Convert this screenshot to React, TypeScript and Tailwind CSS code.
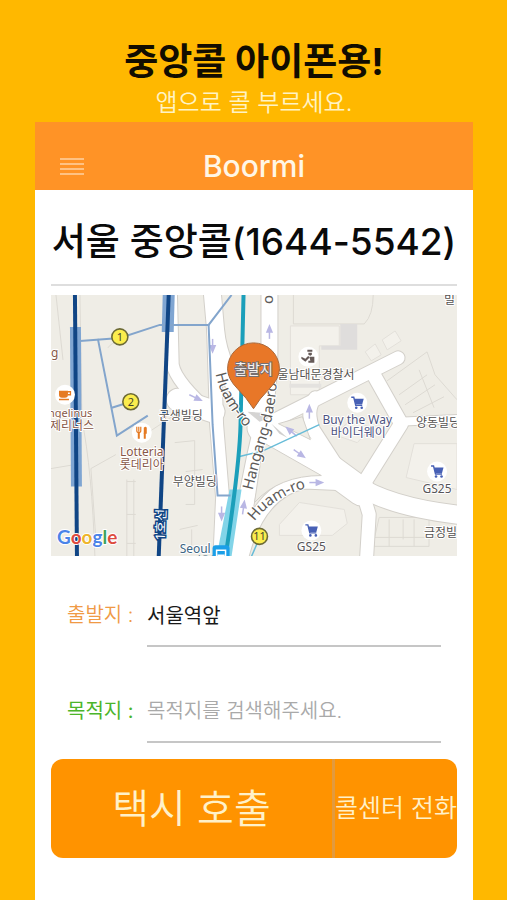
import React from "react";

const roads: { d: string; w: number }[] = [
  { d: "M212 285 L216 330 Q220 375 262 422 L300 450 L360 488", w: 17 },
  { d: "M171 285 L173 365 Q176 382 212 414", w: 12 },
  { d: "M178 400 L214 412", w: 22 },
  { d: "M214 330 L217 425 L223 498 L220 565", w: 13 },
  { d: "M270 285 L270 350 Q270 400 256 455 L234 565", w: 16 },
  { d: "M262 428 L310 454 L362 492", w: 28 },
  { d: "M268 424 L399 358", w: 13 },
  { d: "M374 374 L402 424 L362 488", w: 14 },
  { d: "M400 422 L465 419", w: 8 },
  { d: "M316 398 Q306 410 314 430 L345 478", w: 13 },
  { d: "M240 565 Q256 492 305 482 L350 484", w: 14 },
  { d: "M362 488 L370 515 L367 565", w: 13 },
  { d: "M355 484 Q390 508 465 516", w: 18 },
];

const arrows = [
  { x: 213, y: 346, r: 180 },
  { x: 270, y: 332, r: 0 },
  { x: 196, y: 398, r: 115 },
  { x: 222, y: 514, r: 180 },
  { x: 244, y: 508, r: 8 },
  { x: 310, y: 412, r: 0 },
  { x: 300, y: 454, r: 125 },
  { x: 317, y: 483, r: 90 },
  { x: 292, y: 432, r: -50 },
];

const halo = {
  stroke: "#ffffff",
  strokeWidth: 2,
  strokeLinejoin: "round" as const,
  paintOrder: "stroke" as const,
};

function Cart({ x, y }: { x: number; y: number }) {
  return (
    <g transform={`translate(${x} ${y})`}>
      <circle r="10" fill="#fff" />
      <path d="M-6 -5.500 H-3.500 L-1.500 2.500 H5" fill="none" stroke="#4760b5" strokeWidth="1.400" />
      <path d="M-3 -4 H6.500 L5 1.500 H-1.800 Z" fill="#4760b5" />
      <circle cx="-1" cy="5" r="1.300" fill="#4760b5" />
      <circle cx="4.500" cy="5" r="1.300" fill="#4760b5" />
    </g>
  );
}

function Exit({ x, y, n }: { x: number; y: number; n: string }) {
  return (
    <g>
      <circle cx={x} cy={y} r="8" fill="#fbed4d" stroke="#6c6a35" strokeWidth="1.600" />
      <text x={x} y={y + 4} fontSize="11" textAnchor="middle" fill="#44442c">
        {n}
      </text>
    </g>
  );
}

function StreetMap() {
  return (
    <svg
      viewBox="51 295 407 262"
      role="img"
      aria-label="지도"
      className="block w-full font-['Noto_Sans','Noto_Sans_CJK_KR',sans-serif]"
    >
      <defs>
        <path id="huam-west" d="M216 374 Q221 402 250 432" />
        <path id="hangang" d="M253 491 L264 448 Q277 415 278 365" />
        <path id="huam-south" d="M255 522 Q275 496 312 487" />
      </defs>

      <rect x="51" y="295" width="407" height="262" fill="#efede6" />
      <g fill="none" stroke="#dddad3">
        <path d="M56 295 L63 360 M80 295 L82 420 Q92 470 95 557 M51 469 L75 465 M91 469 L116 455 M91 469 L96 540 M127 480 V557 M134 480 V557 M127 482 H136 M127 515 H136 M127 544 H136" />
        <path d="M294 295 V324 H365 Q374 315 374 295 M108 348 Q112 342 120 342 M145 435 L180 412" />
        <path d="M175 443 L195 441 V505 H186 M192 530 V555 M186 472 L203 470 M180 530 L198 526" />
        <path d="M375 540 L380 518 H430 V547 H375 Z M390 520 V547 M404 520 V540 M415 520 V547 M375 538 H440" />
        <path d="M388 381 L428 352 L436 375 L458 400 M400 395 L428 375 M406 405 L436 385 M414 413 L445 397 M420 370 L435 408" />
      </g>
      <g fill="#f3f1eb" stroke="#e3e0da">
        <path d="M291 326 H340 V346 H320 V395 H291 Z" />
        <path d="M280 525 L300 503 L345 510 L348 524 L333 536 H280 Z" />
        <path d="M407 478 L415 444 H458 V490 Z" />
        <path d="M383 340 L396 331 L402 341 L388 350 Z M366 352 L376 344 L382 355 L372 361 Z" />
        <path d="M335 435 L358 443 L372 428 L352 420 Z" />
      </g>
      <path d="M341 324 H358 V350 H322 V346 H341 Z" fill="#dfdddc" />
      <path d="M290 388 H322 V384 H290 Z" fill="#e4e2df" />

      <g fill="none" strokeLinecap="round" strokeLinejoin="round">
        {roads.map((r) => (
          <path key={r.d} d={r.d} stroke="#d3d0ca" strokeWidth={r.w + 2} />
        ))}
        {roads.map((r) => (
          <path key={r.d} d={r.d} stroke="#ffffff" strokeWidth={r.w} />
        ))}
      </g>
      <path d="M264 443 L322 476 Q280 476 255 503 Z" fill="#efede6" stroke="#d3d0ca" />
      <path d="M279 424 L303 417 L311 440 Z" fill="#efede6" stroke="#d3d0ca" />
      <path d="M248 412 L262 413 L270 418 L260 422 Z" fill="#d5d4d3" />
      <path d="M272 424 L288 438 L280 434 Z" fill="#d0cfce" />

      <g stroke="#b9b7e4" strokeWidth="1.500" fill="#b9b7e4">
        {arrows.map((a) => (
          <g key={`${a.x}-${a.y}`} transform={`translate(${a.x} ${a.y}) rotate(${a.r})`}>
            <path d="M0 7 V-2" />
            <path d="M0 -6 L2.500 0 H-2.500 Z" />
          </g>
        ))}
      </g>

      <path d="M70 327 H81 L82 487 H71 Z" fill="#7fa5d2" />
      <path d="M163 295 H175 L174 332 H162 Z" fill="#7fa5d2" />
      <path d="M230 490 H242 L232 557 H217 Z" fill="#82d4e8" />
      <g fill="none" stroke="#83a5cc" strokeWidth="2">
        <path d="M80 341 L120 338 L160 325 H209 L232 295" />
        <path d="M209 325 L213 425 L218 496 H231" />
        <path d="M98 339 L117 436 L148 416 M112 408 L131 402" />
      </g>
      <path d="M240 457 L264 451 L320 425 M262 534 L252 557" fill="none" stroke="#67bcd8" strokeWidth="1.500" />
      <g fill="none" strokeWidth="4">
        <path d="M75 295 L77 557" stroke="#104585" />
        <path d="M169 295 L159 557" stroke="#104585" />
        <path d="M244 295 L241 425 Q240 465 226 557" stroke="#1b9fba" />
      </g>

      <g fontSize="12" fill="#555250" {...halo}>
        <text x="159" y="420">군생빌딩</text>
        <text x="173" y="486">부양빌딩</text>
        <text x="278" y="379">울남대문경찰서</text>
        <text x="417" y="427">양동빌딩</text>
        <text x="425" y="538">금정빌</text>
        <text x="445" y="304">빌</text>
      </g>
      <g fontSize="12" fill="#885747" {...halo}>
        <text x="51" y="357">g</text>
        <text x="48" y="417" fontSize="11">ngelinus</text>
        <text x="50" y="430">제리너스</text>
        <text x="142" y="456" textAnchor="middle">Lotteria</text>
        <text x="142" y="469" textAnchor="middle">롯데리아</text>
      </g>
      <g fontSize="12" fill="#4c5280" textAnchor="middle" {...halo}>
        <text x="358" y="424">Buy the Way</text>
        <text x="359" y="437">바이더웨이</text>
      </g>
      <g fontSize="12" fill="#565458" textAnchor="middle" {...halo}>
        <text x="438" y="494">GS25</text>
        <text x="312" y="552">GS25</text>
      </g>
      <g fill="#5c5a58" fontSize="15" {...halo}>
        <text>
          <textPath href="#huam-west">Huam-ro</textPath>
        </text>
        <text>
          <textPath href="#hangang">Hangang-daero</textPath>
        </text>
        <text>
          <textPath href="#huam-south">Huam-ro</textPath>
        </text>
        <text transform="translate(274 304) rotate(-90)">o</text>
      </g>
      <text transform="translate(165 541) rotate(-88)" fontSize="13" fill="#ffffff" stroke="#104585" strokeWidth="3" paintOrder="stroke">
        1호선
      </text>

      <Exit x={120} y={337} n="1" />
      <Exit x={131} y={402} n="2" />
      <Exit x={260} y={537} n="11" />
      <Cart x={358} y={403} />
      <Cart x={438} y={472} />
      <Cart x={312} y={531} />

      <g transform="translate(65 395)">
        <circle r="10" fill="#fff" />
        <path d="M-6 -4 H3 V0 Q3 3 0 3 H-3 Q-6 3 -6 0 Z M-6 4 H4 V5.500 H-6 Z" fill="#e57a22" />
        <path d="M3 -3 H5.500 V0 H3" fill="none" stroke="#e57a22" strokeWidth="1.300" />
      </g>
      <g transform="translate(142 433)" stroke="#e57a22" fill="none">
        <circle r="10" fill="#fff" stroke="none" />
        <path d="M-5 -6 V-2 Q-5 0 -3 0 Q-1 0 -1 -2 V-6 M-3 -6 V-1" strokeWidth="1.200" />
        <path d="M-3 0 V6 M3 0 V6" strokeWidth="2" />
        <path d="M2 1 V-5 Q4 -7 5 -5 V1 Z" fill="#e57a22" stroke="none" />
      </g>
      <g transform="translate(309 357)" fill="#655a58">
        <circle r="10" fill="#fff" />
        <path d="M-1 -7 H4 V-5 H-1 Z M0 -4 H3.500 V-2 L2 -1 L0 -2 Z M-7 0 L-3 2 L0 -1 L1 1 L-3 5 L-7 2 Z M1 0 H6 V6 H0 V4 H2 Z" />
      </g>

      <path
        d="M254 409 Q247 398 238 389 Q228 379 228 369 A26 26 0 0 1 280 369 Q280 379 269 390 Q260 399 254 409 Z"
        fill="#e87728"
        stroke="#a9683b"
      />
      <text x="254" y="374" fontSize="14" textAnchor="middle" fill="#f6f2f0" stroke="#777071" strokeWidth="2" paintOrder="stroke">
        출발지
      </text>

      <g>
        <text x="180" y="554" fontSize="12" fill="#3c6583" {...halo}>Seoul</text>
        <text x="192" y="565" fontSize="10" fill="#3c6583">서울역</text>
        <rect x="213" y="546" width="17" height="15" rx="3" fill="#1b9fe8" />
        <path d="M217 560 V551 H226 V560 M218 556 H225" fill="none" stroke="#fff" strokeWidth="1.500" />
      </g>

      <text x="57" y="545" fontSize="19" className="font-['Lato','Liberation_Sans',sans-serif]" fontWeight="bold" {...halo}>
        <tspan fill="#4a83e8">G</tspan>
        <tspan fill="#dd4b3e">o</tspan>
        <tspan fill="#eeb52c">o</tspan>
        <tspan fill="#4a83e8">g</tspan>
        <tspan fill="#3ba35a">l</tspan>
        <tspan fill="#dd4b3e">e</tspan>
      </text>
    </svg>
  );
}

export default function App() {
  return (
    <main className="flex min-h-screen flex-col bg-[#ffb800] pr-[34px] pl-[35px] font-['Inter','Noto_Sans_CJK_KR',sans-serif]">
      <div className="flex flex-col items-center pt-[37px] pb-1 text-center">
        <h1 className="text-[37px] leading-[50px] font-bold text-[#120d00]">중앙콜 아이폰용!</h1>
        <p className="text-2xl leading-[31px] font-[350] text-[#fff3c4]">앱으로 콜 부르세요.</p>
      </div>

      <div className="flex flex-1 flex-col bg-white">
        <header className="grid grid-cols-[1fr_auto_1fr] items-center bg-[#ff9326] px-[25px] pt-6 pb-1">
          <button type="button" aria-label="메뉴" className="flex w-6 flex-col gap-[3px]">
            <span className="h-[2px] w-full bg-[#ffc283]" />
            <span className="h-[2px] w-full bg-[#ffc283]" />
            <span className="h-[2px] w-full bg-[#ffc283]" />
            <span className="h-[2px] w-full bg-[#ffc283]" />
          </button>
          <p className="text-[30px] leading-[40px] font-medium text-[#fff6e6]">Boormi</p>
        </header>

        <div className="px-4">
          <h2 className="border-b-2 border-[#dedede] pt-[27px] pb-[17px] text-center text-[37px] leading-[50px] font-medium whitespace-nowrap text-[#0a0a0a]">
            서울 중앙콜(1644-5542)
          </h2>
          <div className="pt-[9px]">
            <StreetMap />
          </div>

          <form className="pt-[34px]" onSubmit={(e) => e.preventDefault()}>
            <div className="flex flex-col gap-[39px] px-4">
              <div className="flex items-start">
                <label htmlFor="from" className="w-20 shrink-0 text-xl leading-[50px] font-[350] text-[#f09a45]">
                  출발지 :
                </label>
                <input
                  id="from"
                  defaultValue="서울역앞"
                  className="h-[57px] w-full min-w-0 border-b-2 border-[#c6c6c6] pb-[6px] text-xl text-[#1a1a1a] outline-none"
                />
              </div>
              <div className="flex items-start">
                <label htmlFor="to" className="w-20 shrink-0 text-xl leading-[50px] font-normal text-[#4cb52a]">
                  목적지 :
                </label>
                <input
                  id="to"
                  placeholder="목적지를 검색해주세요."
                  className="h-[57px] w-full min-w-0 border-b-2 border-[#c6c6c6] pb-[6px] text-xl font-[350] outline-none placeholder:text-[#a9a9a9]"
                />
              </div>
            </div>
            <div className="mt-4 flex h-[99px] overflow-hidden rounded-xl bg-[#ff9300] text-[#fff1c9]">
              <button type="submit" className="flex-1 border-r-3 border-[#e29a3e] text-[40px] font-[350]">
                택시 호출
              </button>
              <button type="button" className="w-[122px] text-[25px] font-[350] whitespace-nowrap">
                콜센터 전화
              </button>
            </div>
          </form>
        </div>
      </div>
    </main>
  );
}
